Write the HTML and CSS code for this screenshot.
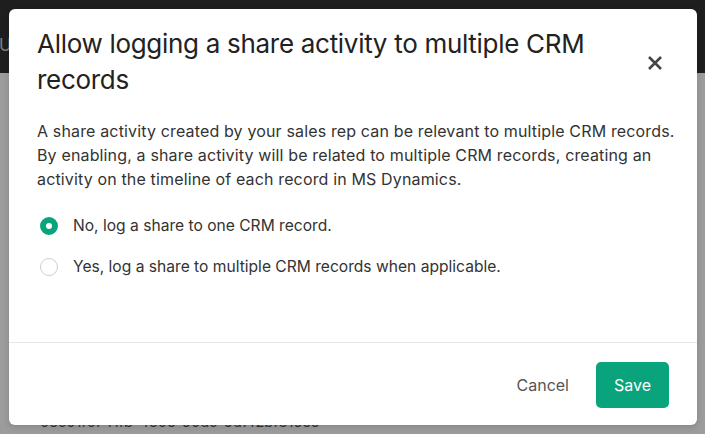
FILE: index.html
```html
<!DOCTYPE html>
<html lang="en">
<head>
  <meta charset="UTF-8">
  <meta name="viewport" content="width=device-width, initial-scale=1.0">
  <title>CRM share logging settings</title>
  <link rel="stylesheet" href="styles.css">
</head>
<body>

  <div class="app">
    <header class="topbar"><span class="topbar-label">U</span></header>
    <main class="page">
      <div class="record-id">05c01f0f-f1fb-450e-90dc-9d7f2bf315e5</div>
    </main>
  </div>

  <!-- Settings modal -->
  <div class="modal" role="dialog">
    <div class="modal-header">
      <h2 class="modal-title">Allow logging a share activity to multiple CRM records</h2>
      <button class="modal-close" aria-label="Close">
        <svg width="16" height="16" viewBox="0 0 16 16">
          <path d="M2 2 L14 14 M14 2 L2 14" stroke="#454545" stroke-width="2.6" stroke-linecap="butt"/>
        </svg>
      </button>
    </div>

    <div class="modal-body">
      <p class="modal-text">A share activity created by your sales rep can be relevant to multiple CRM records.<br>By enabling, a share activity will be related to multiple CRM records, creating an activity on the timeline of each record in MS Dynamics.</p>

      <label class="radio-row">
        <input type="radio" name="shareLog" checked>
        <span class="radio-dot"></span>
        <span>No, log a share to one CRM record.</span>
      </label>
      <label class="radio-row">
        <input type="radio" name="shareLog">
        <span class="radio-dot"></span>
        <span>Yes, log a share to multiple CRM records when applicable.</span>
      </label>
    </div>

    <div class="modal-footer">
      <button class="btn btn-cancel">Cancel</button>
      <button class="btn btn-save">Save</button>
    </div>
  </div>

</body>
</html>
```

FILE: styles.css
```css
/* Page behind the overlay */
body {
  margin: 0;
  height: 434px;
  overflow: hidden;
  font-family: Inter, "Noto Sans", sans-serif;
  background-color: #9c9c9c;
}

.app {
  display: flex;
  flex-direction: column;
  height: 100%;
}

.topbar {
  height: 73px;
  background-color: #1e1e1e;
  display: flex;
  align-items: center;
}

.topbar-label {
  margin-left: -1px;
  margin-top: 16px;
  font-size: 17px;
  color: #7c7c7c;
}

.page {
  flex: 1;
  padding: 340px 0 0 40px;
}

.record-id {
  font-size: 14.5px;
  color: #333;
}

/* Modal */
.modal {
  position: absolute;
  top: 9px;
  left: 9px;
  width: 688px;
  height: 416px;
  background-color: #fff;
  border-radius: 6px;
  box-shadow: 0 2px 6px rgba(0, 0, 0, 0.15);
  display: flex;
  flex-direction: column;
}

.modal-header {
  display: flex;
  align-items: center;
  gap: 12px;
  padding: 17px 30px 0 28px;
}

.modal-title {
  flex: 1;
  margin: 0;
  font-size: 26px;
  line-height: 36px;
  letter-spacing: -0.3px;
  font-weight: 400;
  color: #222;
}

.modal-close {
  width: 24px;
  height: 24px;
  padding: 0;
  border: none;
  background: none;
  display: flex;
  align-items: center;
  justify-content: center;
  margin-top: 2px;
  cursor: pointer;
}

.modal-body {
  flex: 1;
  padding: 21px 14px 0 28px;
}

.modal-text {
  margin: 0 0 14px;
  font-size: 16px;
  line-height: 24px;
  letter-spacing: 0.15px;
  color: #333;
}

.radio-row {
  display: flex;
  align-items: center;
  gap: 15px;
  height: 41px;
  padding-left: 3px;
  font-size: 15.6px;
  color: #333;
  cursor: pointer;
}

.radio-row input {
  display: none;
}

.radio-dot {
  width: 18px;
  height: 18px;
  box-sizing: border-box;
  border-radius: 50%;
  border: 1.5px solid #cfcfcf;
  background-color: #fff;
}

.radio-row input:checked + .radio-dot {
  border: 6px solid #0aa47c;
  background-color: #fff;
}

.modal-footer {
  display: flex;
  justify-content: flex-end;
  align-items: center;
  gap: 9px;
  padding: 19px 28px 17px;
  border-top: 1px solid #e6e6e6;
}

.btn {
  height: 46px;
  padding: 0 18px;
  border: none;
  border-radius: 5px;
  font-family: inherit;
  font-size: 16px;
  cursor: pointer;
}

.btn-cancel {
  background: none;
  color: #555;
}

.btn-save {
  background-color: #0aa47c;
  color: #fff;
}
```
